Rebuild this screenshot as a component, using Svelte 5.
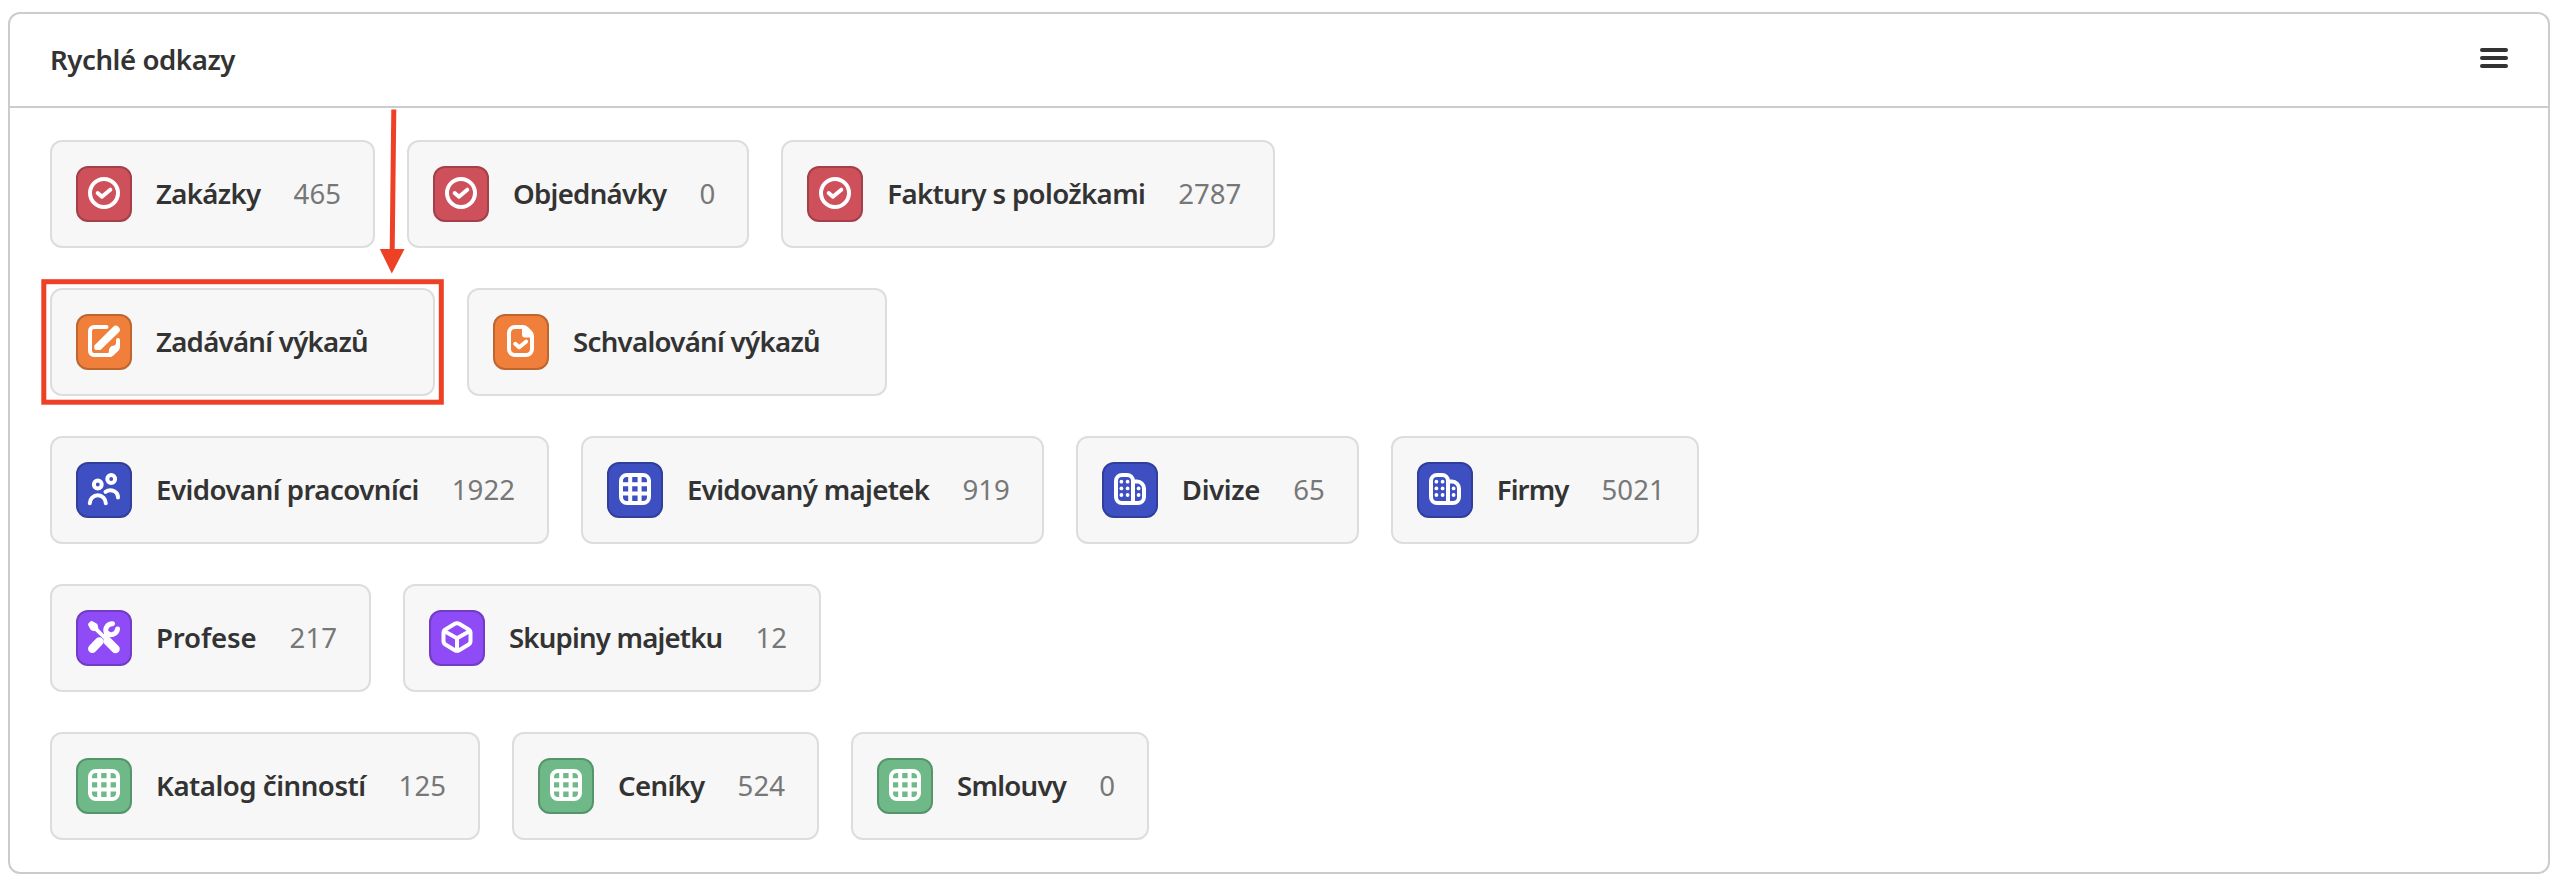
<script>
  export let title = 'Rychlé odkazy';

  // labelWidth keeps the tiles at a stable size whichever font is available
  export let groups = [
    {
      color: 'red',
      links: [
        { icon: 'check', label: 'Zakázky', labelWidth: 104.6, count: 465 },
        { icon: 'check', label: 'Objednávky', labelWidth: 153.4, count: 0 },
        { icon: 'check', label: 'Faktury s položkami', labelWidth: 258, count: 2787 },
      ],
    },
    {
      color: 'orange',
      links: [
        { icon: 'edit', label: 'Zadávání výkazů', labelWidth: 212 },
        { icon: 'file', label: 'Schvalování výkazů', labelWidth: 247 },
      ],
    },
    {
      color: 'blue',
      links: [
        { icon: 'people', label: 'Evidovaní pracovníci', labelWidth: 262.8, count: 1922 },
        { icon: 'grid', label: 'Evidovaný majetek', labelWidth: 242.4, count: 919 },
        { icon: 'building', label: 'Divize', labelWidth: 78.4, count: 65 },
        { icon: 'building', label: 'Firmy', labelWidth: 71.8, count: 5021 },
      ],
    },
    {
      color: 'purple',
      links: [
        { icon: 'tools', label: 'Profese', labelWidth: 100.6, count: 217 },
        { icon: 'cube', label: 'Skupiny majetku', labelWidth: 213.4, count: 12 },
      ],
    },
    {
      color: 'green',
      links: [
        { icon: 'grid', label: 'Katalog činností', labelWidth: 209.6, count: 125 },
        { icon: 'grid', label: 'Ceníky', labelWidth: 86.6, count: 524 },
        { icon: 'grid', label: 'Smlouvy', labelWidth: 109.2, count: 0 },
      ],
    },
  ];

  const DIGIT_WIDTH = 15.8;

  // spreads the letters so that the text fills the given width
  function fit(node, width) {
    const natural = node.getBoundingClientRect().width;
    node.style.letterSpacing = `${(width - natural) / node.textContent.length}px`;
    node.style.width = `${width}px`;
  }
</script>

<div class="page">
  <section class="panel">
    <header class="panel-header">
      <h2 use:fit={185}>{title}</h2>
      <button class="menu" aria-label="Menu">
        <span></span>
        <span></span>
        <span></span>
      </button>
    </header>

    <div class="groups">
      {#each groups as group}
        <div class="group">
          {#each group.links as link}
            <button class="link">
              <span class="icon {group.color}">
                <svg viewBox="0 0 32 32" width="32" height="32">
                  {#if link.icon === 'check'}
                    <circle cx="16" cy="16" r="14" />
                    <path d="M9.7 16l4.2 3.7 8.4-7" />
                  {:else if link.icon === 'edit'}
                    <path d="M18.5 2H6a4 4 0 0 0-4 4v20a4 4 0 0 0 4 4h16" />
                    <path class="solid" d="M6.3 20.5L25 2a3.9 3.9 0 0 1 5.6 5.6L12.5 25H8a1.7 1.7 0 0 1-1.7-1.7z" />
                    <path class="solid" d="M28 15a2 2 0 0 1 4 0v7q0 2-1.4 3.4l-5.2 5.2Q24 32 22 32h-2l1-7q.4-3.5 4-4.2 3-.6 3-2.8z" />
                  {:else if link.icon === 'file'}
                    <path d="M4 8a6 6 0 0 1 6-6h8q2 0 3.5 1.5l4 4Q27 9 27 11v13a6 6 0 0 1-6 6H10a6 6 0 0 1-6-6z" />
                    <path class="solid" d="M17 1v8.5a3 3 0 0 0 3 3h8.5L21 3z" />
                    <path d="M10.2 18.8l4 3.5 7-5.8" />
                  {:else if link.icon === 'people'}
                    <circle cx="9.8" cy="11.5" r="3.9" />
                    <circle cx="23.2" cy="6" r="3.9" />
                    <path d="M1.8 30.3a8 8 0 0 1 16 0" />
                    <path d="M17.5 18.8c5.5-3.8 12.5-.3 12.5 5.7" />
                  {:else if link.icon === 'grid'}
                    <rect x="2" y="2" width="28" height="28" rx="6" />
                    <path d="M11.2 2v28M20.6 2v28M2 11.2h28M2 20.6h28" />
                  {:else if link.icon === 'building'}
                    <path d="M19 8.5h4a7 7 0 0 1 7 7V24a6 6 0 0 1-6 6H8a6 6 0 0 1-6-6V8a6 6 0 0 1 6-6h5a6 6 0 0 1 6 6v22" />
                    {#each [[7.4, 8.7], [13.6, 8.7], [7.4, 15.4], [13.6, 15.4], [7.4, 22], [13.6, 22], [24.6, 15.4], [24.6, 22]] as [cx, cy]}
                      <circle class="solid" {cx} {cy} r="1.9" />
                    {/each}
                  {:else if link.icon === 'tools'}
                    <path class="solid" d="M.6 2.3L2.3.6Q3.2-.3 4.5.3l4 2.2Q9.6 3.2 9.8 4.5l.5 3L18 15.5 15.5 18 7.5 10.3l-3-.5Q3.2 9.6 2.5 8.5l-2.2-4Q-.3 3.2.6 2.3z" />
                    <path class="handle" d="M19.5 20l8 8" />
                    <path class="handle" d="M4.3 27.7l7-7.2" />
                    <path class="wrench" d="M24.5 2.7a6.5 6.5 0 0 0-6.3 8.8 6.5 6.5 0 0 0 11.3-3.5" />
                    <path d="M20 12l-3.5 3.5" />
                  {:else}
                    <path d="M13.8 2.8q2.2-1.3 4.4 0l9 5.4Q29.5 9.6 29.5 12v8q0 2.4-2.3 3.8l-9 5.4q-2.2 1.3-4.4 0l-9-5.4Q2.5 22.4 2.5 20v-8q0-2.4 2.3-3.8z" />
                    <path d="M4 10.5l12 6.7 12-6.7M16 17.2V29" />
                  {/if}
                </svg>
              </span>
              <span class="label" use:fit={link.labelWidth}>{link.label}</span>
              {#if link.count !== undefined}
                <span class="count" use:fit={String(link.count).length * DIGIT_WIDTH}>{link.count}</span>
              {/if}
            </button>
          {/each}
        </div>
      {/each}
    </div>
  </section>

  <svg class="annotation" viewBox="0 0 2560 882" width="2560" height="882">
    <rect x="43.8" y="281.7" width="397.5" height="120.5" />
    <path class="line" d="M393.8 109.5L392.2 251" />
    <path class="head" d="M379.8 249h24.7l-12.7 24.5z" />
  </svg>
</div>

<style>
  :global(body) {
    margin: 0;
    background: #fff;
  }

  .page {
    position: relative;
    box-sizing: border-box;
    width: 2560px;
    height: 882px;
    padding: 12px 10px 8px 8px;
    overflow: hidden;
    font-family: 'Noto Sans', sans-serif;
    font-size: 27.6px;
    line-height: 40px;
    color: #333;
  }

  .panel {
    box-sizing: border-box;
    height: 862px;
    border: 2px solid #ccc;
    border-radius: 12px;
    background: #fff;
  }

  .panel-header {
    display: flex;
    justify-content: space-between;
    align-items: center;
    box-sizing: border-box;
    height: 94px;
    padding: 0 40px 2px;
    border-bottom: 2px solid #ccc;
  }

  h2 {
    margin: 0;
    font-size: inherit;
    font-weight: 600;
    white-space: nowrap;
  }

  .menu {
    all: unset;
    display: flex;
    flex-direction: column;
    gap: 4px;
    width: 28px;
    padding-bottom: 2px;
    cursor: pointer;
  }

  .menu span {
    height: 4px;
    border-radius: 2px;
    background: #333;
  }

  .groups {
    display: flex;
    flex-direction: column;
    gap: 40px;
    padding: 32px 40px;
  }

  .group {
    display: flex;
    gap: 32px;
  }

  .link {
    all: unset;
    display: flex;
    align-items: center;
    box-sizing: border-box;
    height: 108px;
    padding: 0 1px 0 24px;
    border: 2px solid #ddd;
    border-radius: 12px;
    background: #f7f7f7;
    white-space: nowrap;
    cursor: pointer;
  }

  .icon {
    display: flex;
    flex-shrink: 0;
    box-sizing: border-box;
    width: 56px;
    height: 56px;
    margin-right: 24px;
    padding: 9px 10px;
    border: 2px solid;
    border-radius: 12px;
  }

  .icon svg {
    overflow: visible;
    fill: none;
    stroke: #fff;
    stroke-width: 4;
    stroke-linecap: round;
    stroke-linejoin: round;
  }

  .icon .solid {
    fill: #fff;
    stroke: none;
  }

  .icon .handle {
    stroke-width: 8.5;
  }

  .icon .wrench {
    stroke-width: 5;
  }

  .red {
    background: #cd505b;
    border-color: #a4404a;
  }

  .orange {
    background: #ef7f3a;
    border-color: #bf662f;
  }

  .blue {
    background: #3e4fc1;
    border-color: #323f9a;
  }

  .purple {
    background: #8f4bf6;
    border-color: #723cc5;
  }

  .green {
    background: #6fb988;
    border-color: #56946b;
  }

  .label,
  .count {
    flex-shrink: 0;
    padding-bottom: 2px;
  }

  .label {
    margin-right: 33px;
    font-weight: 600;
  }

  .label:last-child {
    margin-right: 64px;
  }

  .count {
    margin-right: 31px;
    color: #777;
  }

  .annotation {
    position: absolute;
    top: 0;
    left: 0;
    pointer-events: none;
    fill: none;
    stroke: #ed4024;
    stroke-width: 5;
  }

  .annotation .head {
    fill: #ed4024;
    stroke: none;
  }
</style>
